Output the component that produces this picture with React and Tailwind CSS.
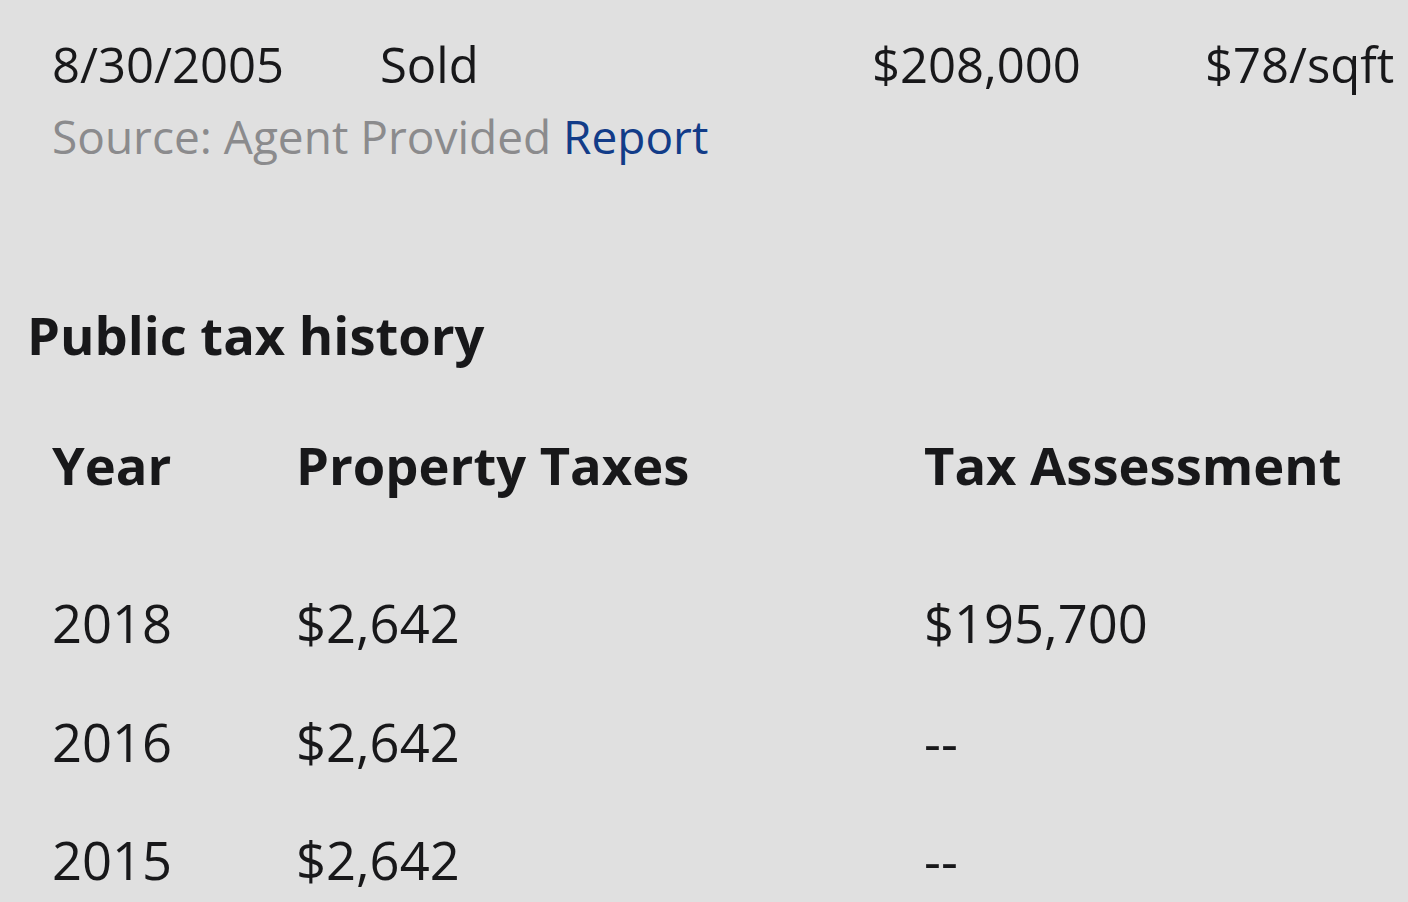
import React from 'react';

const taxRows = [
  { year: '2018', taxes: '$2,642', assessment: '$195,700' },
  { year: '2016', taxes: '$2,642', assessment: '--' },
  { year: '2015', taxes: '$2,642', assessment: '--' }
];

const App = () => {
  return (
    <div
      className="h-[902px] w-full overflow-hidden bg-[#e0e0e0] pt-[28px] text-[#18181a]"
      style={{ fontFamily: '"Open Sans", "Noto Sans", sans-serif' }}
    >
      <div className="pl-[52px]">
        <div className="flex h-[73px] text-[49px] leading-[73px] whitespace-nowrap">
          <span className="w-[328px] shrink-0">8/30/2005</span>
          <span className="w-[492px] shrink-0">Sold</span>
          <span className="w-[333px] shrink-0">$208,000</span>
          <span className="shrink-0">$78/sqft</span>
        </div>
        <div className="h-[70px] text-[46px] leading-[70px] whitespace-nowrap text-[#8b8b8d]">
          Source: Agent Provided <a href="#" className="text-[#123c88]">Report</a>
        </div>
      </div>

      <h2 className="mt-[127px] pl-[27px] text-[52.5px] font-bold leading-[73px]">Public tax history</h2>

      <div className="mt-[57px] pl-[52px] text-[52.5px]">
        <div className="flex h-[73px] font-bold leading-[73px] whitespace-nowrap">
          <span className="w-[244px] shrink-0">Year</span>
          <span className="w-[628px] shrink-0">Property Taxes</span>
          <span className="shrink-0">Tax Assessment</span>
        </div>
        <div className="mt-[85px]">
          {taxRows.map((row) => (
            <div key={row.year} className="flex h-[118.5px] leading-[73px] whitespace-nowrap">
              <span className="w-[244px] shrink-0">{row.year}</span>
              <span className="w-[628px] shrink-0">{row.taxes}</span>
              <span className="shrink-0">{row.assessment}</span>
            </div>
          ))}
        </div>
      </div>
    </div>
  );
};

export default App;
